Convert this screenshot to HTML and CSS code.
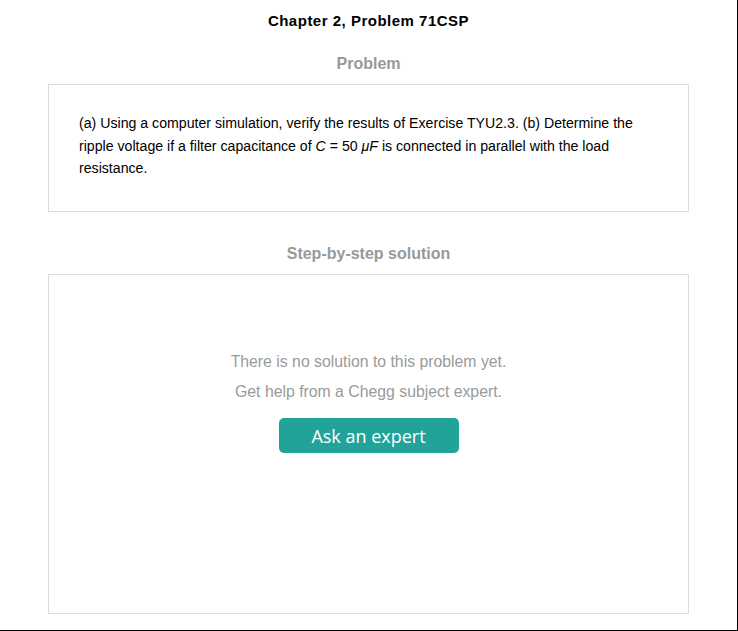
FILE: index.html
```html
<!DOCTYPE html>
<html>
<head>
<meta charset="utf-8">
<link rel="stylesheet" href="styles.css">
</head>
<body>
<div class="page">
  <h1 class="title">Chapter 2, Problem 71CSP</h1>
  <h2 class="section-title">Problem</h2>
  <div class="box problem-box">
    <p class="problem-text">(a) Using a computer simulation, verify the results of Exercise TYU2.3. (b) Determine the ripple voltage if a filter capacitance of <i>C</i> = 50 <i>μF</i> is connected in parallel with the load resistance.</p>
  </div>
  <h2 class="section-title section-gap">Step-by-step solution</h2>
  <div class="box solution-box">
    <p class="no-solution">There is no solution to this problem yet.</p>
    <p class="no-solution">Get help from a Chegg subject expert.</p>
    <button class="ask-btn">Ask an expert</button>
  </div>
</div>
</body>
</html>
```
FILE: styles.css
```css
html, body {
  margin: 0;
  padding: 0;
  background: #fff;
}
.page {
  box-sizing: border-box;
  width: 738px;
  height: 631px;
  border-right: 1px solid #000;
  border-bottom: 1px solid #000;
  padding: 11px 48px 0 48px;
  font-family: "Liberation Sans", Arial, sans-serif;
  display: flex;
  flex-direction: column;
}
.title {
  margin: 0;
  font-size: 15px;
  letter-spacing: 0.5px;
  line-height: 20px;
  font-weight: bold;
  color: #000;
  text-align: center;
}
.section-title {
  margin: 23px 0 10px;
  font-size: 16px;
  line-height: 20px;
  font-weight: bold;
  color: #999;
  text-align: center;
}
.section-gap {
  margin-top: 32px;
}
.box {
  box-sizing: border-box;
  width: 641px;
  border: 1px solid #dcdcdc;
  background: #fff;
}
.problem-box {
  height: 128px;
  padding: 27px 30px 0 30px;
}
.problem-text {
  margin: 0;
  font-size: 14.15px;
  line-height: 22.5px;
  color: #000;
}
.solution-box {
  height: 340px;
  padding-top: 72px;
  display: flex;
  flex-direction: column;
  align-items: center;
}
.no-solution {
  margin: 0;
  font-size: 15.8px;
  line-height: 30px;
  color: #9a9a9a;
}
.ask-btn {
  margin-top: 11px;
  width: 180px;
  height: 35px;
  border: none;
  border-radius: 5px;
  background: #21a39a;
  color: #fff;
  font-family: "Open Sans", sans-serif;
  font-size: 18px;
  padding: 0;
  cursor: pointer;
}
```
